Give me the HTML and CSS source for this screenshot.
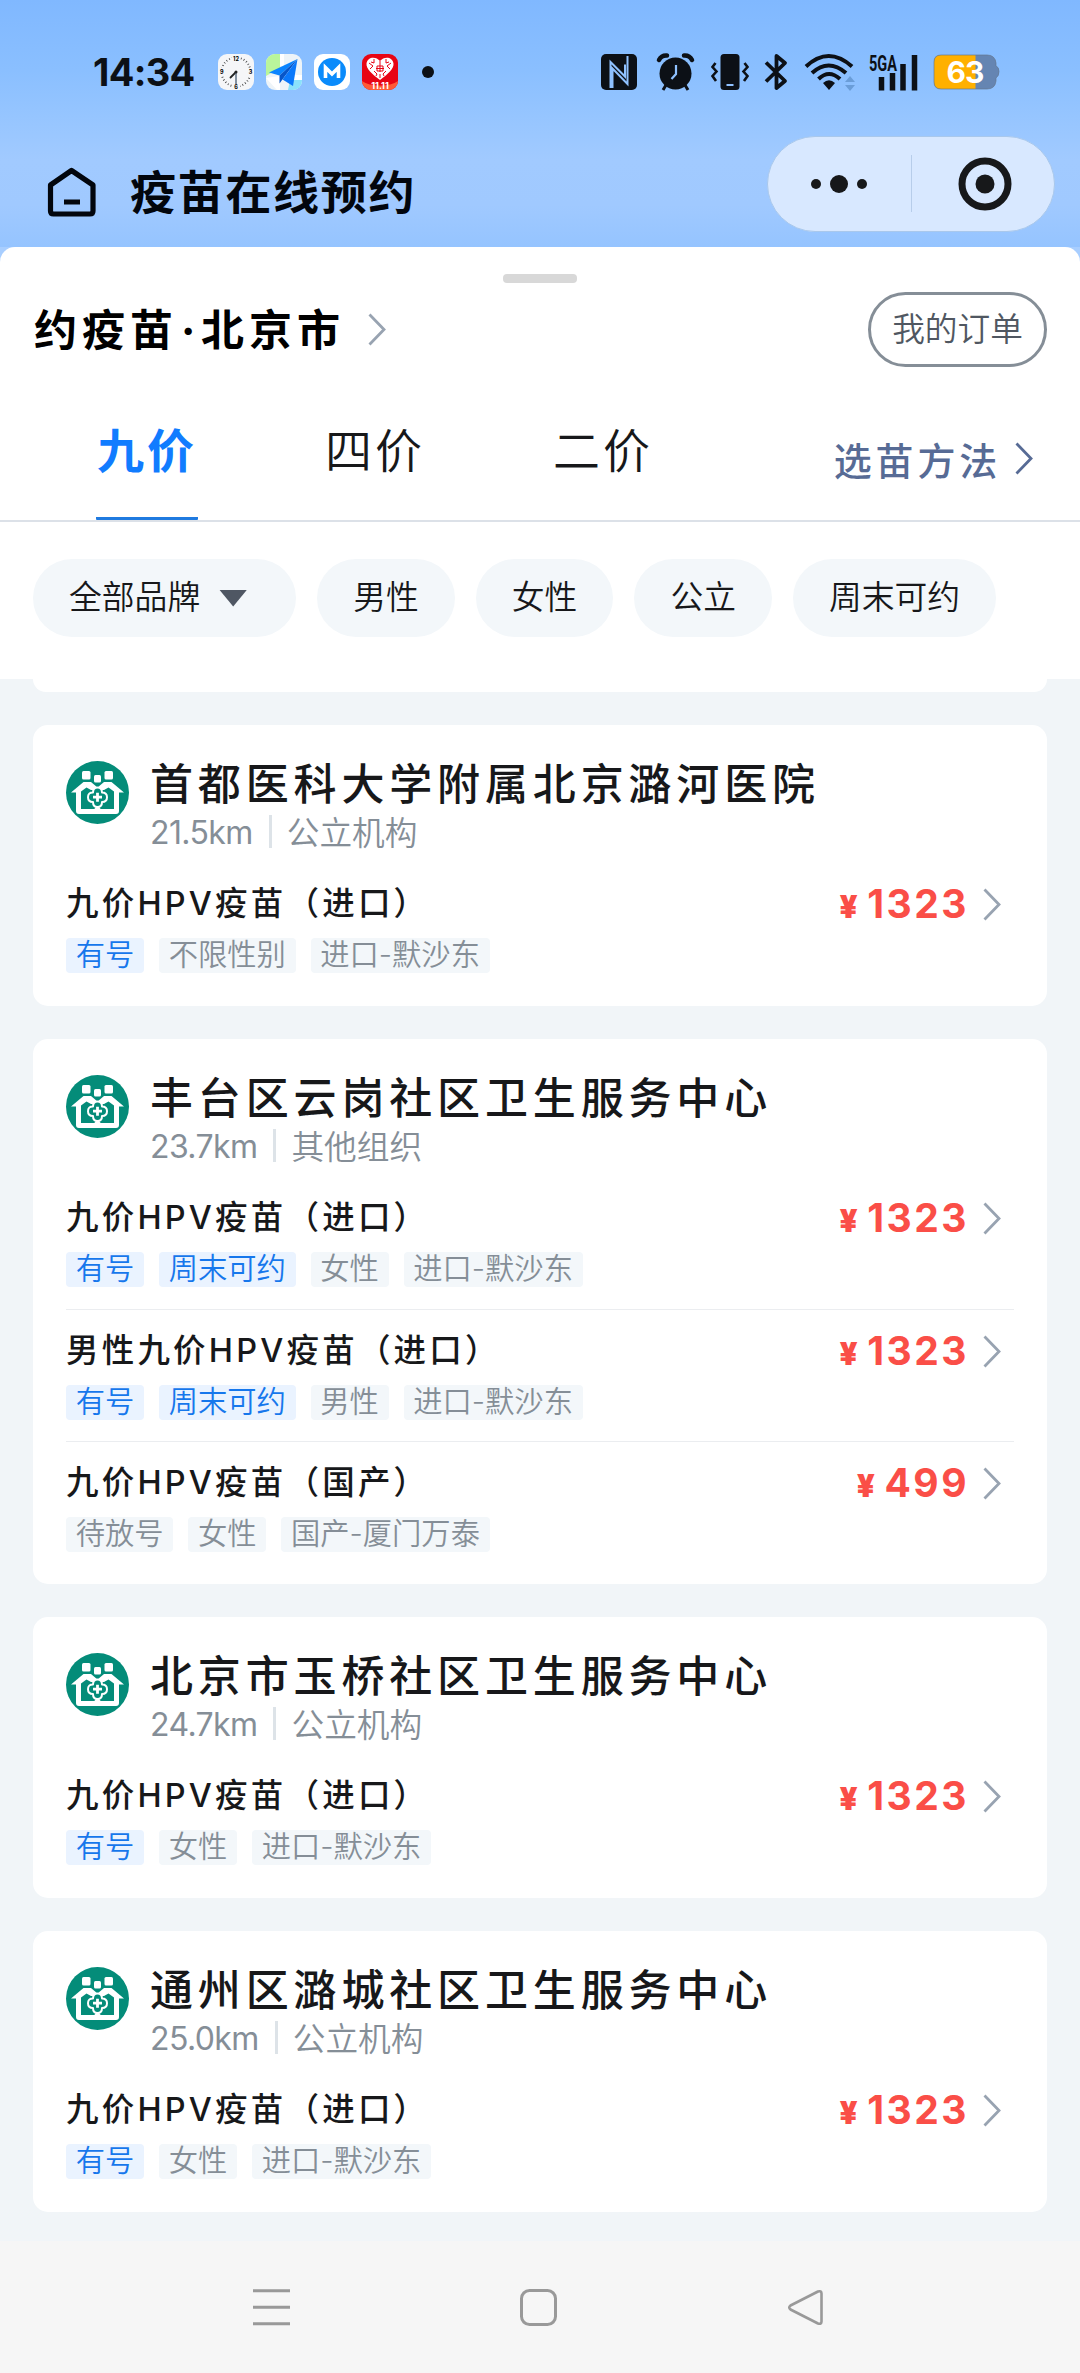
FILE: index.html
```html
<!DOCTYPE html>
<html lang="zh-CN">
<head>
<meta charset="utf-8">
<title>疫苗在线预约</title>
<link rel="stylesheet" href="styles.css">
</head>
<body>
<svg width="0" height="0" class="defs">
  <symbol id="chevron" viewBox="0 0 18 33"><path d="M1.5 1.5 16 16.5 1.5 31.5" fill="none" stroke="currentColor" stroke-width="2.8"/></symbol>
  <symbol id="clinic" viewBox="0 0 63 63">
    <circle cx="31.500" cy="31.500" r="31.500" fill="#048c79"/>
    <g fill="#fff"><rect x="16" y="10" width="8.500" height="8.500" rx="1.500"/><rect x="38.500" y="10" width="8.500" height="8.500" rx="1.500"/><rect x="28" y="14" width="7" height="7.500" rx="1.500"/></g>
    <path fill="#fff" d="M5 31.500 17.500 21h7.500l6.500 5.500L38 21h7.500L58 31.500H53V50q0 3-3 3H13q-3 0-3-3V31.500z"/>
    <path fill="#048c79" d="M15 48V30.500l5.500-4 4.500 2.500h13l4.500-2.500 5.500 4V48z"/>
    <path fill="#048c79" stroke="#fff" stroke-width="2" stroke-linejoin="round" d="M31.500 26.500q4.500 0 4.500 5 5 0 5 4.700t-5 4.800q0 5-4.500 5T27 41q-5 0-5-4.800t5-4.700q0-5 4.500-5z"/>
    <path d="M31.500 31.700v9M27 36.200h9" stroke="#fff" stroke-width="2.800"/>
    <path fill="#fff" d="m27.500 49 2.500-3h3l2.500 3z"/>
  </symbol>
</svg>

<header class="top">
  <div class="status">
    <span class="time">14:34</span>
    <div class="apps">
      <svg width="36" height="36" viewBox="0 0 36 36">
        <rect width="36" height="36" rx="9" fill="#f5f6f8"/>
        <circle cx="18" cy="18" r="14.500" fill="none" stroke="#444" stroke-width="2" stroke-dasharray=".8 2.237"/>
        <g fill="#f5f6f8"><path d="M14 1h8v5h-8zM14 30h8v5h-8zM1 14h5v8H1zM30 14h5v8h-5z"/></g>
        <g class="dial"><text x="18" y="6.500">12</text><text x="32.500" y="20.200">3</text><text x="18" y="34.500">6</text><text x="3.700" y="20.200">9</text></g>
        <path d="M18 18 12.500 23.500" stroke="#222" stroke-width="1.800" stroke-linecap="round"/><path d="M18 18v12" stroke="#5d6f83" stroke-width="1.500"/><circle cx="18" cy="18" r="1.500" fill="#222"/>
      </svg>
      <svg width="36" height="36" viewBox="0 0 36 36">
        <clipPath id="mapclip"><rect width="36" height="36" rx="9"/></clipPath>
        <g clip-path="url(#mapclip)"><path fill="#eef4f8" d="M0 0h36v36H0z"/><path fill="#b9f59b" d="M0 0h14v14L0 22z"/><path fill="#8be2fb" d="M24 26h12v10H22z"/><path fill="#fff" d="M14 0h4v12h-4zM0 24l14-2v14h-3z"/><path fill="#fff" d="M26 21h10v5H26z"/></g>
        <path fill="#0a84ff" d="M31.500 5 3 18.500l10.500 3z"/><path fill="#0756c9" d="M31.500 5 13.500 21.500v8z"/><path fill="#0a78fb" d="M31.500 5 16.500 25.500 27 32z"/>
      </svg>
      <svg width="36" height="36" viewBox="0 0 36 36"><rect width="36" height="36" rx="9" fill="#fff"/><circle cx="18" cy="18" r="14" fill="#0a8bfb"/><path d="M11.500 24V13.500L18 20l6.500-6.500V24" fill="none" stroke="#fff" stroke-width="3.600"/></svg>
      <svg width="36" height="36" viewBox="0 0 36 36">
        <rect width="36" height="36" rx="9" fill="#e80514"/><path d="M0 27c8 6 28 6 36 0a9 9 0 0 1-9 9H9a9 9 0 0 1-9-9z" fill="#ff5a36"/>
        <path d="M18 26C10 20 4 15 4.500 9.500 5.500 2.500 14 2 18 7c4-5 12.500-4.500 13.500 2.500C32 15 26 20 18 26z" fill="#fff"/>
        <g fill="none" stroke="#e80514" stroke-width="1"><path d="M18 7v4M15 12h6v5h-6zM18 11v7M14 14.500h8M7 9l4 3-3 3M29 9l-4 3 3 3M12 5v4l-3-1M24 5v4l3-1M12 17l3 3-1 2M24 17l-3 3 1 2M18 20v4"/></g>
        <text x="18" y="34.500" class="promo">11.11</text>
      </svg>
      <i class="more-dot"></i>
    </div>
    <div class="signals">
      <svg width="36" height="36" viewBox="0 0 36 36"><rect width="36" height="36" rx="5" fill="#0c1016"/><path d="M9.500 34V8L24 22.500V10.500M26.500 2v28L11.500 14.500V34" fill="none" stroke="#8fc1ff" stroke-width="2"/></svg>
      <svg class="alarm" width="37" height="38" viewBox="0 0 37 38"><g fill="none" stroke="#0c1016"><path d="M2 7q2.500-5 8-4.500M35 7q-2.500-5-8-4.500" stroke-width="4.500" stroke-linecap="round"/><path d="m9 32-3 5M28 32l3 5" stroke-width="3"/></g><circle cx="18.500" cy="20.500" r="16" fill="#0c1016"/><path d="M19 12v9l-4.500 5" fill="none" stroke="#8fc1ff" stroke-width="2.200"/></svg>
      <svg class="vibrate" width="38" height="36" viewBox="0 0 38 36"><rect x="9.500" width="19" height="36" rx="3.500" fill="#0c1016"/><path d="M15.500 31h7" stroke="#8fc1ff" stroke-width="2"/><path d="m4.500 9-3 4 4 4.500-4 4.500 3.500 5M33.500 9l3 4-4 4.500 4 4.500-3.500 5" fill="none" stroke="#0c1016" stroke-width="2.600"/></svg>
      <svg class="bt" width="23" height="38" viewBox="0 0 23 38"><path d="M1 9.500 20 28 11.500 35V3L20 10 1 28.500" fill="none" stroke="#0c1016" stroke-width="3.800" stroke-linejoin="round"/></svg>
      <svg class="wifi" width="51" height="37" viewBox="0 0 51 37"><g fill="none" stroke="#0c1016" stroke-width="4"><path d="M2 12.500q22.500-21 46 0M8 19q16.500-15 34 0M14.500 25q10.500-10 21.500 0"/></g><path d="m25 36-6-7q6-5.500 12 0z" fill="#0c1016"/><path d="m46 22 5 6H41zm0 15 5-6H41z" fill="#6a9dd8"/></svg>
      <svg class="cell" width="49" height="38" viewBox="0 0 49 38"><text x="0" y="17.500" class="net" textLength="28" lengthAdjust="spacingAndGlyphs">5GA</text><path d="M12.500 37.500V24M23.500 37.500V20M34 37.500V11M45.500 37.500V2" stroke="#0c1016" stroke-width="5.500"/></svg>
      <svg class="battery" width="67" height="36" viewBox="0 0 67 36"><path d="M8 1h46q8 0 9 8v3q3 1 3 5.500T63 24v3q-1 8-9 8H8q-7 0-7-7V8q0-7 7-7z" fill="#6585b2"/><path d="M42.500 1H8Q1 1 1 8v20q0 7 7 7h34.500z" fill="#ffb000"/><path d="M8 1h46q8 0 9 8v3q3 1 3 5.500T63 24v3q-1 8-9 8H8q-7 0-7-7V8q0-7 7-7z" fill="none" stroke="#64748b" stroke-opacity=".65"/><text x="32" y="28.500" class="level">63</text></svg>
    </div>
  </div>
  <div class="appbar">
    <svg class="home" width="50" height="50" viewBox="0 0 50 50"><path d="M24.500 3.500 46 18v26q0 3-3 3H6.500q-3 0-3-3V18z" fill="none" stroke="#02060d" stroke-width="5.200" stroke-linejoin="round"/><path d="M17 35h16" stroke="#02060d" stroke-width="5"/></svg>
    <h1>疫苗在线预约</h1>
    <div class="capsule">
      <svg width="56" height="20" viewBox="0 0 56 20"><g fill="#17181a"><circle cx="5" cy="10" r="5"/><circle cx="28" cy="10" r="9"/><circle cx="51" cy="10" r="5"/></g></svg>
      <i class="bar"></i>
      <svg width="54" height="54" viewBox="0 0 54 54"><circle cx="27" cy="27" r="23" fill="none" stroke="#17181a" stroke-width="7"/><circle cx="27" cy="27" r="9.500" fill="#17181a"/></svg>
    </div>
  </div>
</header>

<section class="sheet">
  <div class="handle"></div>
  <div class="place">
    <h2>约疫苗<span class="mid">·</span>北京市</h2>
    <svg class="chev grey" width="18" height="33"><use href="#chevron"/></svg>
    <button class="orders">我的订单</button>
  </div>
  <nav class="tabs">
    <a class="tab active">九价</a><a class="tab">四价</a><a class="tab">二价</a>
    <a class="method">选苗方法<svg class="chev" width="18" height="33"><use href="#chevron"/></svg></a>
  </nav>
  <div class="filters">
    <span class="chip brand">全部品牌<i class="caret"></i></span><span class="chip">男性</span><span class="chip">女性</span><span class="chip">公立</span><span class="chip">周末可约</span>
  </div>
</section>

<main class="list">
  <div class="card tail"></div>

  <article class="card">
    <div class="org"><svg width="63" height="63"><use href="#clinic"/></svg><div><h3>首都医科大学附属北京潞河医院</h3><p class="meta"><span class="km">21.5km</span><i></i><span>公立机构</span></p></div></div>
    <div class="item"><div class="line"><span class="name">九价HPV疫苗（进口）</span><span class="price"><b class="yen">¥</b>1323</span><svg class="chev grey" width="18" height="33"><use href="#chevron"/></svg></div>
      <div class="tags"><span class="on">有号</span><span>不限性别</span><span>进口-默沙东</span></div></div>
  </article>

  <article class="card">
    <div class="org"><svg width="63" height="63"><use href="#clinic"/></svg><div><h3>丰台区云岗社区卫生服务中心</h3><p class="meta"><span class="km">23.7km</span><i></i><span>其他组织</span></p></div></div>
    <div class="item"><div class="line"><span class="name">九价HPV疫苗（进口）</span><span class="price"><b class="yen">¥</b>1323</span><svg class="chev grey" width="18" height="33"><use href="#chevron"/></svg></div>
      <div class="tags"><span class="on">有号</span><span class="on">周末可约</span><span>女性</span><span>进口-默沙东</span></div></div>
    <div class="item"><div class="line"><span class="name">男性九价HPV疫苗（进口）</span><span class="price"><b class="yen">¥</b>1323</span><svg class="chev grey" width="18" height="33"><use href="#chevron"/></svg></div>
      <div class="tags"><span class="on">有号</span><span class="on">周末可约</span><span>男性</span><span>进口-默沙东</span></div></div>
    <div class="item"><div class="line"><span class="name">九价HPV疫苗（国产）</span><span class="price"><b class="yen">¥</b>499</span><svg class="chev grey" width="18" height="33"><use href="#chevron"/></svg></div>
      <div class="tags"><span>待放号</span><span>女性</span><span>国产-厦门万泰</span></div></div>
  </article>

  <article class="card">
    <div class="org"><svg width="63" height="63"><use href="#clinic"/></svg><div><h3>北京市玉桥社区卫生服务中心</h3><p class="meta"><span class="km">24.7km</span><i></i><span>公立机构</span></p></div></div>
    <div class="item"><div class="line"><span class="name">九价HPV疫苗（进口）</span><span class="price"><b class="yen">¥</b>1323</span><svg class="chev grey" width="18" height="33"><use href="#chevron"/></svg></div>
      <div class="tags"><span class="on">有号</span><span>女性</span><span>进口-默沙东</span></div></div>
  </article>

  <article class="card">
    <div class="org"><svg width="63" height="63"><use href="#clinic"/></svg><div><h3>通州区潞城社区卫生服务中心</h3><p class="meta"><span class="km">25.0km</span><i></i><span>公立机构</span></p></div></div>
    <div class="item"><div class="line"><span class="name">九价HPV疫苗（进口）</span><span class="price"><b class="yen">¥</b>1323</span><svg class="chev grey" width="18" height="33"><use href="#chevron"/></svg></div>
      <div class="tags"><span class="on">有号</span><span>女性</span><span>进口-默沙东</span></div></div>
  </article>
</main>

<footer class="sysnav">
  <svg width="37" height="37" viewBox="0 0 37 37"><path d="M0 1.800h37M0 18.300h37M0 34.800h37" stroke="#999" stroke-width="3"/></svg>
  <svg width="37" height="37" viewBox="0 0 37 37"><rect x="1.500" y="1.500" width="34" height="34" rx="8" fill="none" stroke="#999" stroke-width="3"/></svg>
  <svg width="37" height="37" viewBox="0 0 37 37"><path d="M31 2.500 3.500 16.500q-2.500 2 0 4L31 34.500q3.500 1 3.500-2v-28q0-3-3.500-2z" fill="none" stroke="#999" stroke-width="2.600" stroke-linejoin="round"/></svg>
</footer>
</body>
</html>
```

FILE: styles.css
```css
* { box-sizing: border-box; }
body { margin: 0; width: 1080px; height: 2373px; overflow: hidden; display: flex; flex-direction: column; background: linear-gradient(#a8ceff, #a8ceff) 0 0 / 100% 270px no-repeat #f1f5f8; color: #17181a; font-family: Inter, "Noto Sans CJK SC", sans-serif; }
h1, h2, h3, p { margin: 0; }
i { display: block; font-style: normal; }
svg { display: block; flex: none; overflow: visible; }
.defs { position: absolute; }

.top { height: 247px; flex: none; background: linear-gradient(#80b8ff 0, #8abfff 70px, #98c6ff 125px, #a1caff 160px, #a0c9ff 205px, #95c4ff 247px); }
.status { height: 136px; padding: 8px 80px 0 93px; display: flex; align-items: center; color: #0c1016; }
.time { width: 125px; font-size: 38px; font-weight: 700; line-height: 40px; letter-spacing: -0.700px; }
.apps { display: flex; align-items: center; gap: 12px; }
.dial { font: 700 5.5px Inter, sans-serif; text-anchor: middle; }
.promo { font: 700 9px Inter, sans-serif; fill: #fff; text-anchor: middle; }
.more-dot { width: 12px; height: 12px; margin-left: 12px; border-radius: 50%; background: #0c1016; }
.signals { margin-left: auto; display: flex; align-items: center; }
.alarm { margin-left: 20px; }
.vibrate { margin-left: 17px; }
.bt { margin-left: 16px; }
.wifi { margin-left: 16px; }
.cell { margin-left: 14px; }
.battery { margin-left: 15px; }
.net { font: 700 22px Roboto, sans-serif; fill: #0c1016; }
.level { font: 700 30px Inter, sans-serif; fill: #fff; text-anchor: middle; letter-spacing: -1px; }

.appbar { height: 95px; padding: 0 25px 0 47px; display: flex; align-items: center; }
.home { margin-top: 17px; }
.appbar h1 { margin: 16px 0 0 33px; font-size: 46px; line-height: 60px; font-weight: 700; letter-spacing: 1.700px; color: #02060d; }
.capsule { margin-left: auto; width: 288px; height: 96px; padding: 0 42px 0 43px; border: 1px solid #a9c8ec; border-radius: 48px; background: #d8e8ff; display: flex; align-items: center; justify-content: space-between; }
.capsule .bar { width: 1px; height: 57px; margin-left: 2px; margin-right: 4px; background: #b7cdea; }

.sheet { height: 432px; flex: none; background: #fff; border-radius: 15px 15px 0 0; padding-top: 27px; }
.handle { width: 74px; height: 9px; margin: 0 auto; border-radius: 4px; background: #d8d8d8; }
.place { height: 75px; margin-top: 9px; padding: 0 33px 0 34px; display: flex; align-items: center; }
.place h2 { font-size: 43px; line-height: 60px; font-weight: 700; letter-spacing: 5px; color: #000; }
.mid { display: inline-block; width: 23px; letter-spacing: 0; text-indent: 3px; }
.chev { color: #576b95; }
.grey { color: #98a3b1; }
.place .chev { margin-left: 23px; }
.orders { margin-left: auto; width: 179px; height: 75px; padding: 0 0 5px; border: 3px solid #858e97; border-radius: 38px; background: #fff; font: 350 32.7px/60px "Noto Sans CJK SC", sans-serif; color: #505761; }
.tabs { height: 155px; padding: 0 47px 0 96px; display: flex; align-items: stretch; border-bottom: 2px solid #dce1e8; }
.tab { width: 102px; margin-right: 126px; padding: 54px 0 0 1px; font-size: 47px; font-weight: 350; line-height: 60px; letter-spacing: 3px; white-space: nowrap; }
.active { height: 153px; font-weight: 700; color: #117cff; border-bottom: 3px solid #1f7ae0; border-radius: 1px; }
.method { margin-left: auto; height: 60px; margin-top: 61px; display: flex; align-items: center; gap: 14px; font-size: 38px; font-weight: 500; letter-spacing: 3.8px; color: #576b95; }
.filters { padding: 37px 33px 0; display: flex; gap: 21px; }
.chip { height: 78px; padding: 0 36px 2px; border-radius: 39px; background: #f3f7fa; font-size: 32.800px; font-weight: 350; line-height: 74px; display: flex; align-items: center; }
.caret { width: 28px; height: 17px; margin: 2px 13px 0 19px; background: #4f5763; clip-path: polygon(0 0, 100% 0, 50% 100%); }

.list { height: 1562px; flex: none; padding: 0 33px; display: flex; flex-direction: column; gap: 33px; background: #f1f5f8; }
.card { flex: none; padding: 36px 33px 11px; border-radius: 15px; background: #fff; }
.tail { height: 13px; padding: 0; border-radius: 0 0 15px 15px; }
.org { height: 102px; display: flex; align-items: flex-start; gap: 21px; }
.org h3 { font-size: 43px; line-height: 47px; font-weight: 500; letter-spacing: 4.850px; }
.meta { height: 49px; display: flex; align-items: center; font-size: 32.700px; font-weight: 350; line-height: 46px; color: #858e97; }
.meta .km { font-size: 32px; font-weight: 400; letter-spacing: -.600px; }
.meta i { width: 3px; height: 33px; margin: -3px 15px 0 16px; background: #dde3e8; }
.item { height: 132px; padding-top: 20px; }
.item + .item { border-top: 1px solid #ebedf0; }
.line { height: 42px; display: flex; align-items: center; padding-right: 13px; }
.name { font-size: 32.500px; line-height: 42px; font-weight: 500; letter-spacing: 3.200px; }
.price { margin: 2px 14px 0 auto; line-height: 42px; font-size: 39px; font-weight: 700; letter-spacing: 2.500px; color: #fa4e47; }
.yen { font-size: 31px; margin-right: 7px; }
.tags { margin-top: 13px; display: flex; gap: 15px; }
.tags span { height: 35px; padding: 0 9.700px; border-radius: 4px; background: #f3f7fa; font-size: 29.300px; font-weight: 350; line-height: 33px; color: #858e97; white-space: nowrap; }
.tags .on { background: #eaf3ff; color: #1677ec; }

.sysnav { flex: 1; padding: 48px 256px 0 253px; background: #f6f6f6; display: flex; justify-content: space-between; align-items: flex-start; }
```
